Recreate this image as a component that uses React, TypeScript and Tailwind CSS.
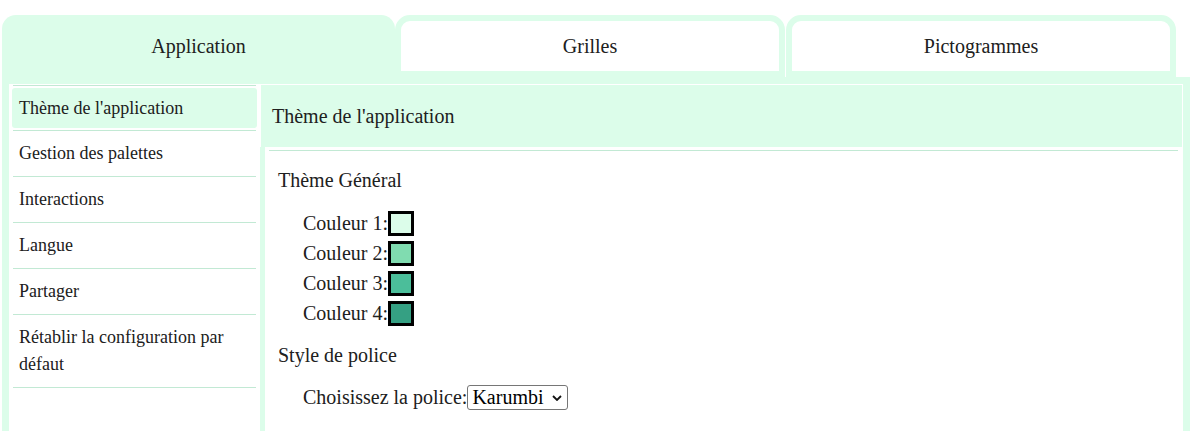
import React from "react";

const items = [
  "Gestion des palettes",
  "Interactions",
  "Langue",
  "Partager",
  "Rétablir la configuration par défaut",
];

const colours = ["#dcfdea", "#80dcb0", "#4bbe9a", "#35a083"];

function Line({ className = "" }: { className?: string }) {
  return <div className={"h-px bg-[#c2e9d4] " + className} />;
}

export default function App() {
  return (
    <div className="h-[431px] overflow-hidden bg-white pl-[2px] pt-[15px] font-['Liberation_Serif',serif] text-[#202020]">
      <div className="w-[1188px]">
        {/* Tabs */}
        <div className="flex h-[62px]">
          <div className="flex w-[393px] items-center justify-center rounded-t-[14px] bg-[#dcfdea] text-[20px]">
            Application
          </div>
          <div className="flex w-[390px] items-center justify-center rounded-t-[15px] border-[6px] border-[#dcfdea] bg-white text-[20px]">
            Grilles
          </div>
          <div className="ml-px flex w-[390px] items-center justify-center rounded-t-[15px] border-[6px] border-[#dcfdea] bg-white text-[20px]">
            Pictogrammes
          </div>
        </div>

        {/* Frame */}
        <div className="flex h-[400px] bg-[#dcfdea] px-[7px] pt-[7px]">
          {/* Sidebar */}
          <div className="w-[251px] bg-white px-[3px] pt-px text-[18px]">
            <Line className="mx-px" />
            <div className="my-[2px] flex h-[40px] items-center rounded-[3px] bg-[#dcfdea] pl-[7px] leading-[27px]">
              Thème de l'application
            </div>
            <Line className="mx-px" />
            {items.map((t) => (
              <div key={t} className="mx-px">
                <div className="py-[9px] pl-[6px] pr-[4px] leading-[27px]">{t}</div>
                <Line />
              </div>
            ))}
          </div>

          {/* Right panel */}
          <div className="flex flex-1 flex-col">
            <div className="flex h-[63px] items-center border-x border-t border-white pl-[11px] text-[20px]">
              Thème de l'application
            </div>
            <div className="ml-[5px] flex-1 bg-white pt-[3px] text-[20px]">
              <Line className="ml-[4px] mr-[5px]" />
              <div className="pl-[13px]">
                <div className="mt-[18px] leading-[23px]">Thème Général</div>
                <div className="mt-[16px] ml-[25px]">
                  {colours.map((c, i) => (
                    <div key={c} className="flex h-[30px] items-center">
                      <span className="leading-[23px]">Couleur {i + 1}:</span>
                      <span
                        className="block h-[25px] w-[26px] border-[3px] border-black"
                        style={{ backgroundColor: c }}
                      />
                    </div>
                  ))}
                </div>
                <div className="mt-[16px] leading-[23px]">Style de police</div>
                <div className="mt-[18px] ml-[25px] flex h-[25px] items-center">
                  <span className="leading-[23px]">Choisissez la police:</span>
                  <div className="relative">
                    <select
                      defaultValue="Karumbi"
                      className="block h-[25px] w-[101px] appearance-none rounded-[3px] border border-[#767676] bg-white pl-[4px] text-[20px] leading-[21px] text-black"
                    >
                      <option>Karumbi</option>
                    </select>
                    <svg
                      className="pointer-events-none absolute right-[6px] top-[10px]"
                      width="10"
                      height="6"
                      viewBox="0 0 10 6"
                    >
                      <path d="M1 1 L5 5 L9 1" fill="none" stroke="#111" strokeWidth="1.8" />
                    </svg>
                  </div>
                </div>
              </div>
            </div>
          </div>
        </div>
      </div>
    </div>
  );
}
